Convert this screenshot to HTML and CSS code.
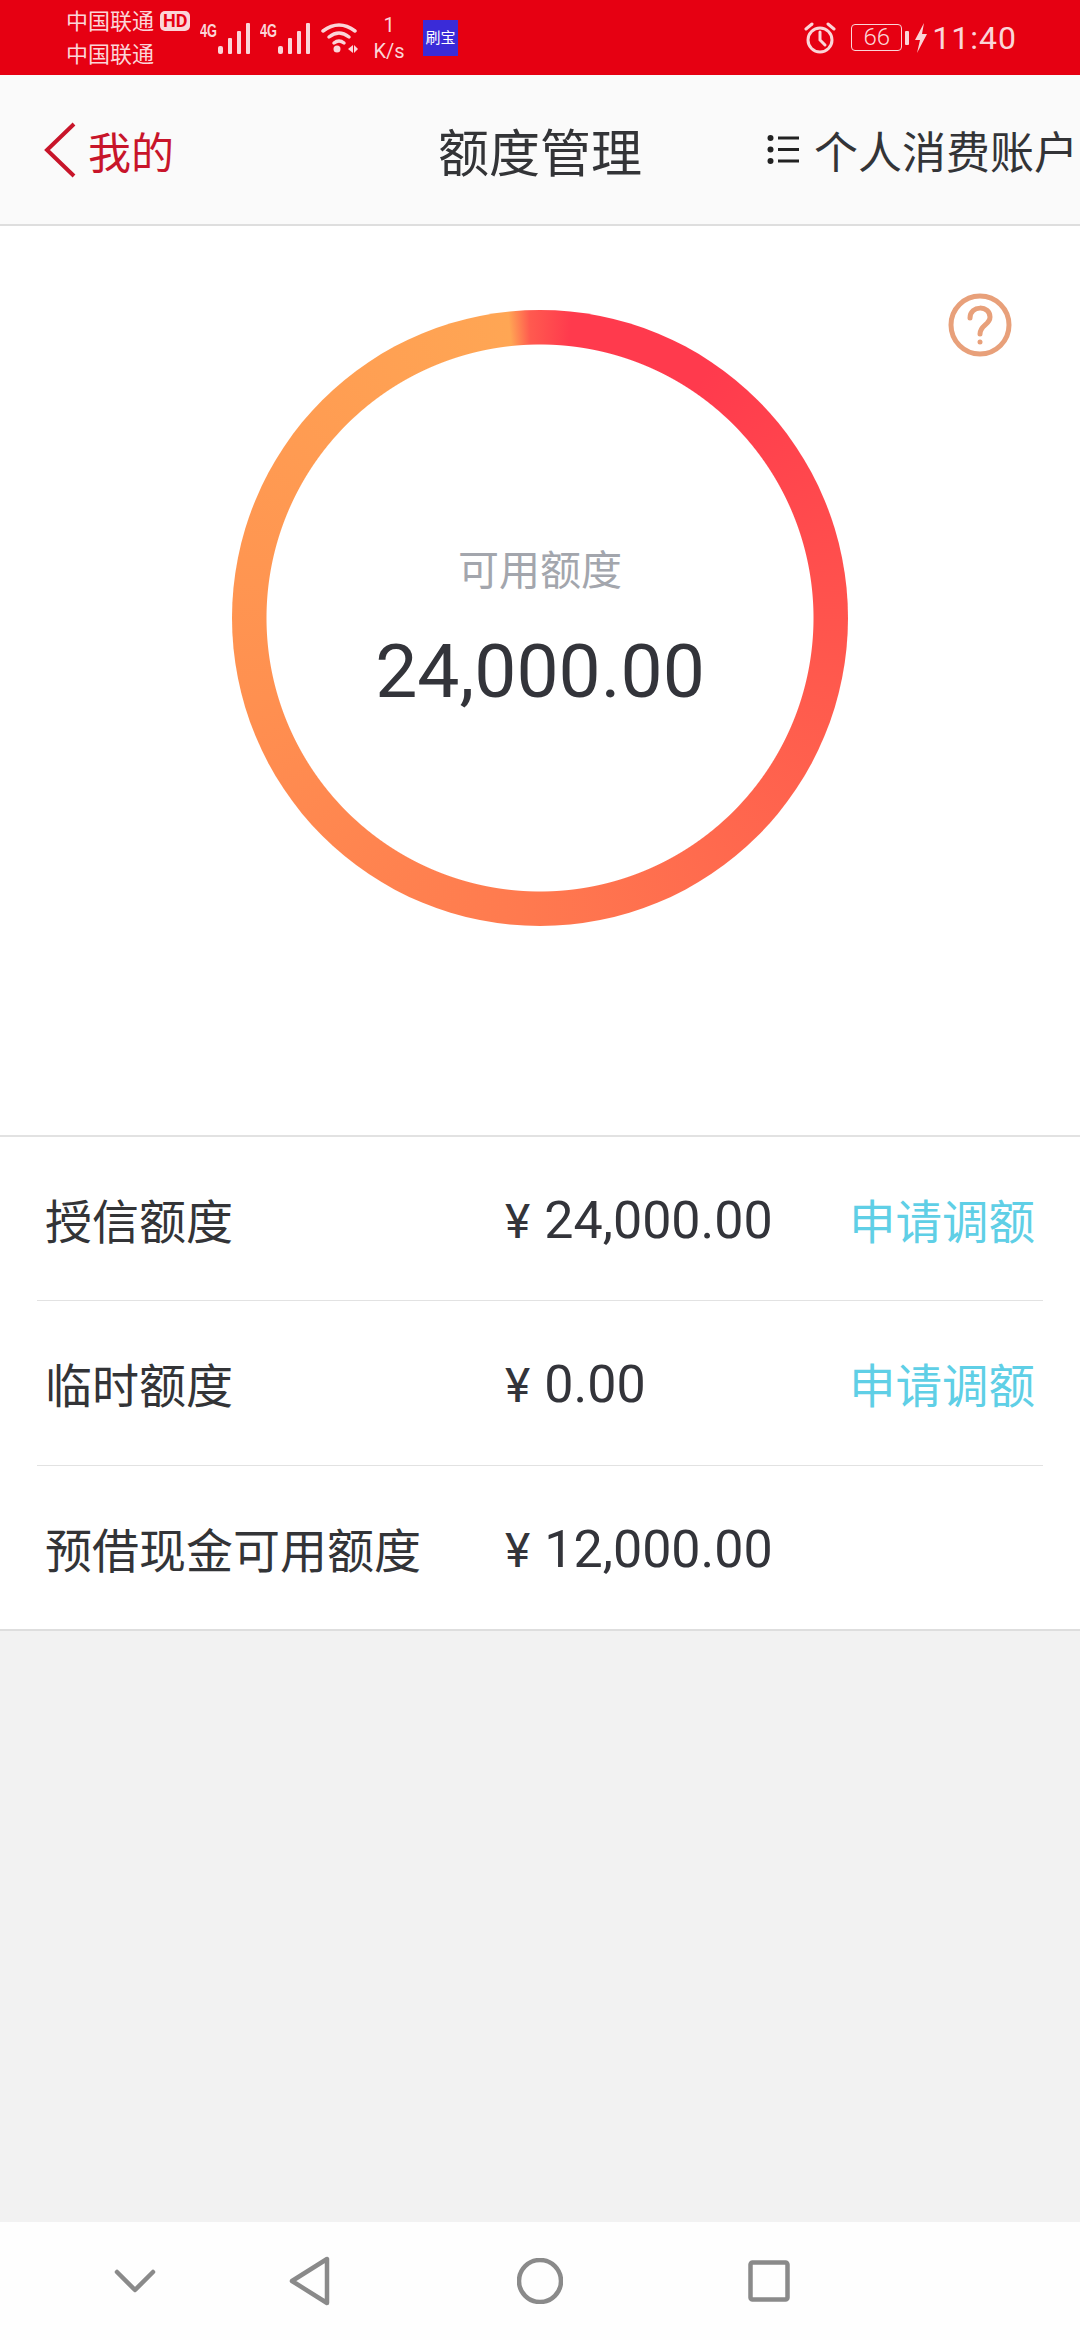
FILE: index.html
```html
<!DOCTYPE html>
<html lang="zh">

<head>
    <meta charset="UTF-8">
    <meta name="viewport" content="width=device-width, initial-scale=1.0">
    <title>额度管理</title>
    <link rel="stylesheet" href="styles.css">
</head>

<body>
    <div class="phone">
        <div class="status-bar">
            <div class="status-left">
                <div class="carrier">
                    <div class="carrier-line">中国联通<span class="hd">HD</span></div>
                    <div class="carrier-line">中国联通</div>
                </div>
                <svg class="signal" width="60" height="36" viewBox="0 0 60 36">
                    <text x="0" y="17" class="net-text" textLength="17" lengthAdjust="spacingAndGlyphs">4G</text>
                    <rect x="18" y="26" width="5" height="8" rx="2" />
                    <rect x="28" y="18" width="4" height="16" rx="1" />
                    <rect x="37" y="11" width="4" height="23" rx="1" />
                    <rect x="46" y="3" width="4" height="31" rx="1" />
                </svg>
                <svg class="signal" width="60" height="36" viewBox="0 0 60 36">
                    <text x="0" y="17" class="net-text" textLength="17" lengthAdjust="spacingAndGlyphs">4G</text>
                    <rect x="18" y="26" width="5" height="8" rx="2" />
                    <rect x="28" y="18" width="4" height="16" rx="1" />
                    <rect x="37" y="11" width="4" height="23" rx="1" />
                    <rect x="46" y="3" width="4" height="31" rx="1" />
                </svg>
                <svg class="wifi" width="38" height="32" viewBox="0 0 38 32">
                    <path d="M2 9 Q18 -3 34 9" />
                    <path d="M8 15 Q18 7 28 15" />
                    <path d="M13 21 Q18 17 23 21" />
                    <circle cx="16" cy="27" r="3.5" class="wifi-fill" />
                    <path d="M27 27 l5 -4 v8 z M33 23 l4 4 l-4 4 z" class="wifi-fill" />
                </svg>
                <div class="speed">
                    <div>1</div>
                    <div>K/s</div>
                </div>
                <div class="app-badge">刷宝</div>
            </div>
            <div class="status-right">
                <svg class="alarm" width="32" height="34" viewBox="0 0 32 34">
                    <circle cx="16" cy="19" r="12" />
                    <path d="M16 11 V19 L21 24" />
                    <path d="M2 8 L8 3" />
                    <path d="M30 8 L24 3" />
                </svg>
                <div class="battery">66</div>
                <div class="battery-tip"></div>
                <svg class="bolt" width="14" height="30" viewBox="0 0 14 30">
                    <path d="M10 0 L1 17 H6 L3 30 L13 11 H8 Z" />
                </svg>
                <div class="clock">11:40</div>
            </div>
        </div>

        <div class="header">
            <div class="back">
                <svg width="34" height="56" viewBox="0 0 34 56">
                    <path d="M31 2 L4 28 L31 54" />
                </svg>
                <span>我的</span>
            </div>
            <div class="title">额度管理</div>
            <div class="account">
                <svg width="32" height="32" viewBox="0 0 32 32">
                    <circle cx="3.5" cy="4" r="3" />
                    <circle cx="3.5" cy="15.5" r="3" />
                    <circle cx="3.5" cy="27" r="3" />
                    <rect x="11" y="2.5" width="21" height="3" />
                    <rect x="11" y="14" width="21" height="3" />
                    <rect x="11" y="25.5" width="21" height="3" />
                </svg>
                <span>个人消费账户</span>
            </div>
        </div>

        <div class="hero">
            <svg class="help" width="64" height="64" viewBox="0 0 64 64">
                <circle cx="32" cy="32" r="29" />
                <path d="M22 25 C22 12 42 12 42 24 C42 32 32 32 32 41" />
                <circle cx="32" cy="49" r="2.5" class="help-dot" />
            </svg>
            <div class="ring">
                <div class="ring-label">可用额度</div>
                <div class="ring-value">24,000.00</div>
            </div>
        </div>

        <div class="limits">
            <div class="limit-row">
                <div class="limit-name">授信额度</div>
                <div class="limit-value"><span class="yen">¥</span>24,000.00</div>
                <div class="limit-link">申请调额</div>
            </div>
            <div class="limit-row">
                <div class="limit-name">临时额度</div>
                <div class="limit-value"><span class="yen">¥</span>0.00</div>
                <div class="limit-link">申请调额</div>
            </div>
            <div class="limit-row">
                <div class="limit-name">预借现金可用额度</div>
                <div class="limit-value"><span class="yen">¥</span>12,000.00</div>
            </div>
        </div>

        <div class="filler"></div>

        <div class="nav-bar">
            <svg width="42" height="24" viewBox="0 0 42 24">
                <path d="M3 3 L21 21 L39 3" />
            </svg>
            <svg width="42" height="50" viewBox="0 0 42 50">
                <path d="M38 3 V47 L3 25 Z" />
            </svg>
            <svg width="46" height="46" viewBox="0 0 46 46">
                <circle cx="23" cy="23" r="21" />
            </svg>
            <svg width="42" height="42" viewBox="0 0 42 42">
                <rect x="2.5" y="2.5" width="37" height="37" rx="2" />
            </svg>
        </div>
    </div>
</body>

</html>
```

FILE: styles.css
```css
* {
    box-sizing: border-box;
}

body {
    margin: 0;
    font-family: Roboto, "Noto Sans CJK SC", sans-serif;
    background-color: #f2f2f2;
}

.phone {
    width: 1080px;
    height: 2340px;
    display: flex;
    flex-direction: column;
    overflow: hidden;
}

/* status bar */
.status-bar {
    height: 75px;
    padding: 0 63px 0 66px;
    display: flex;
    justify-content: space-between;
    align-items: center;
    background-color: #e60012;
    color: #fbd5d8;
}

.status-left,
.status-right {
    display: flex;
    align-items: center;
}

.carrier {
    width: 134px;
    font-size: 22px;
    line-height: 33px;
}

.carrier-line {
    display: flex;
    align-items: center;
    white-space: nowrap;
}

.hd {
    margin-left: 6px;
    padding: 0 3px;
    height: 20px;
    border-radius: 5px;
    background-color: #fbd5d8;
    color: #e60012;
    font-size: 18px;
    font-weight: 700;
    line-height: 20px;
}

.signal {
    fill: #fbd5d8;
}

.net-text {
    font-family: "Liberation Sans", sans-serif;
    font-size: 18px;
    font-weight: 700;
}

.wifi {
    margin-left: 1px;
    fill: none;
    stroke: #fbd5d8;
    stroke-width: 3.5;
    stroke-linecap: round;
}

.wifi-fill {
    fill: #fbd5d8;
    stroke: none;
}

.speed {
    width: 50px;
    margin-left: 5px;
    font-size: 20px;
    line-height: 26px;
    text-align: center;
}

.app-badge {
    width: 35px;
    height: 36px;
    margin-left: 9px;
    background-color: #3a2bd8;
    color: #fff;
    font-size: 15px;
    line-height: 36px;
    text-align: center;
    white-space: nowrap;
}

.alarm {
    fill: none;
    stroke: #fbd5d8;
    stroke-width: 3;
    stroke-linecap: round;
}

.battery {
    width: 51px;
    height: 27px;
    margin-left: 15px;
    border: 1.5px solid #fbd5d8;
    border-radius: 4px;
    font-size: 24px;
    font-weight: 300;
    line-height: 24px;
    text-align: center;
}

.battery-tip {
    width: 4px;
    height: 14px;
    margin-left: 3px;
    border-radius: 1px;
    background-color: #fbd5d8;
}

.bolt {
    margin-left: 5px;
    fill: #fbd5d8;
}

.clock {
    margin-left: 4px;
    font-size: 32px;
    letter-spacing: 1px;
}

/* header */
.header {
    height: 151px;
    padding: 0 2px;
    display: grid;
    grid-template-columns: 1fr auto 1fr;
    align-items: center;
    background-color: #fafafa;
    border-bottom: 2px solid #dedede;
}

.back {
    margin-left: 41px;
    display: flex;
    align-items: center;
    color: #c8152a;
    font-size: 43px;
}

.back svg {
    fill: none;
    stroke: #c8152a;
    stroke-width: 4;
    margin-right: 11px;
}

.title {
    font-size: 51px;
    color: #333437;
}

.account {
    justify-self: end;
    display: flex;
    align-items: center;
    color: #333437;
    font-size: 44px;
    white-space: nowrap;
}

.account svg {
    fill: #222;
    margin-right: 15px;
}

/* ring */
.hero {
    height: 909px;
    position: relative;
    padding-top: 84px;
    display: flex;
    justify-content: center;
    align-items: flex-start;
    background-color: #fff;
}

.help {
    position: absolute;
    top: 67px;
    right: 68px;
    fill: none;
    stroke: #e8a07a;
    stroke-width: 5;
    stroke-linecap: round;
}

.help-dot {
    fill: #e8a07a;
    stroke: none;
}

.ring {
    width: 616px;
    height: 616px;
    padding-top: 22px;
    border-radius: 50%;
    display: flex;
    flex-direction: column;
    align-items: center;
    justify-content: center;
    background:
        radial-gradient(circle, #fff 273px, transparent 274px),
        conic-gradient(from -6deg, #ffa654 0deg, #ff5a4f 4deg, #ff3a4d 12deg, #ff3a4d 40deg, #ff5a4d 110deg, #ff7a4f 190deg, #ff9050 260deg, #ffa654 360deg);
}

.ring-label {
    font-size: 41px;
    line-height: 56px;
    color: #a3a6ad;
}

.ring-value {
    margin-top: 28px;
    font-size: 75px;
    line-height: 88px;
    color: #33343a;
}

/* rows */
.limits {
    height: 496px;
    padding: 0 37px;
    background-color: #fff;
    border-top: 2px solid #e2e2e2;
    border-bottom: 2px solid #dedede;
    display: flex;
    flex-direction: column;
}

.limit-row {
    flex: 1;
    padding: 0 8px;
    display: flex;
    align-items: center;
    border-bottom: 1px solid #e2e2e2;
}

.limit-row:last-child {
    border-bottom: none;
}

.limit-name {
    width: 460px;
    font-size: 47px;
    color: #333437;
    white-space: nowrap;
}

.limit-value {
    flex: 1;
    padding-top: 4px;
    font-size: 52px;
    color: #33343a;
    white-space: nowrap;
}

.yen {
    margin-right: 14px;
    font-size: 48px;
}

.limit-link {
    font-size: 46.5px;
    color: #5fcfe6;
    white-space: nowrap;
}

.filler {
    flex: 1;
    background-color: #f2f2f2;
}

/* bottom nav */
.nav-bar {
    height: 118px;
    padding-left: 114px;
    display: flex;
    align-items: center;
    background-color: #fefefe;
}

.nav-bar svg {
    fill: none;
    stroke: #8a8a8a;
    stroke-width: 4.5;
    stroke-linejoin: round;
    stroke-linecap: round;
}

.nav-bar svg:nth-child(2) {
    margin-left: 133px;
}

.nav-bar svg:nth-child(3) {
    margin-left: 186px;
}

.nav-bar svg:nth-child(4) {
    margin-left: 185px;
}
```
